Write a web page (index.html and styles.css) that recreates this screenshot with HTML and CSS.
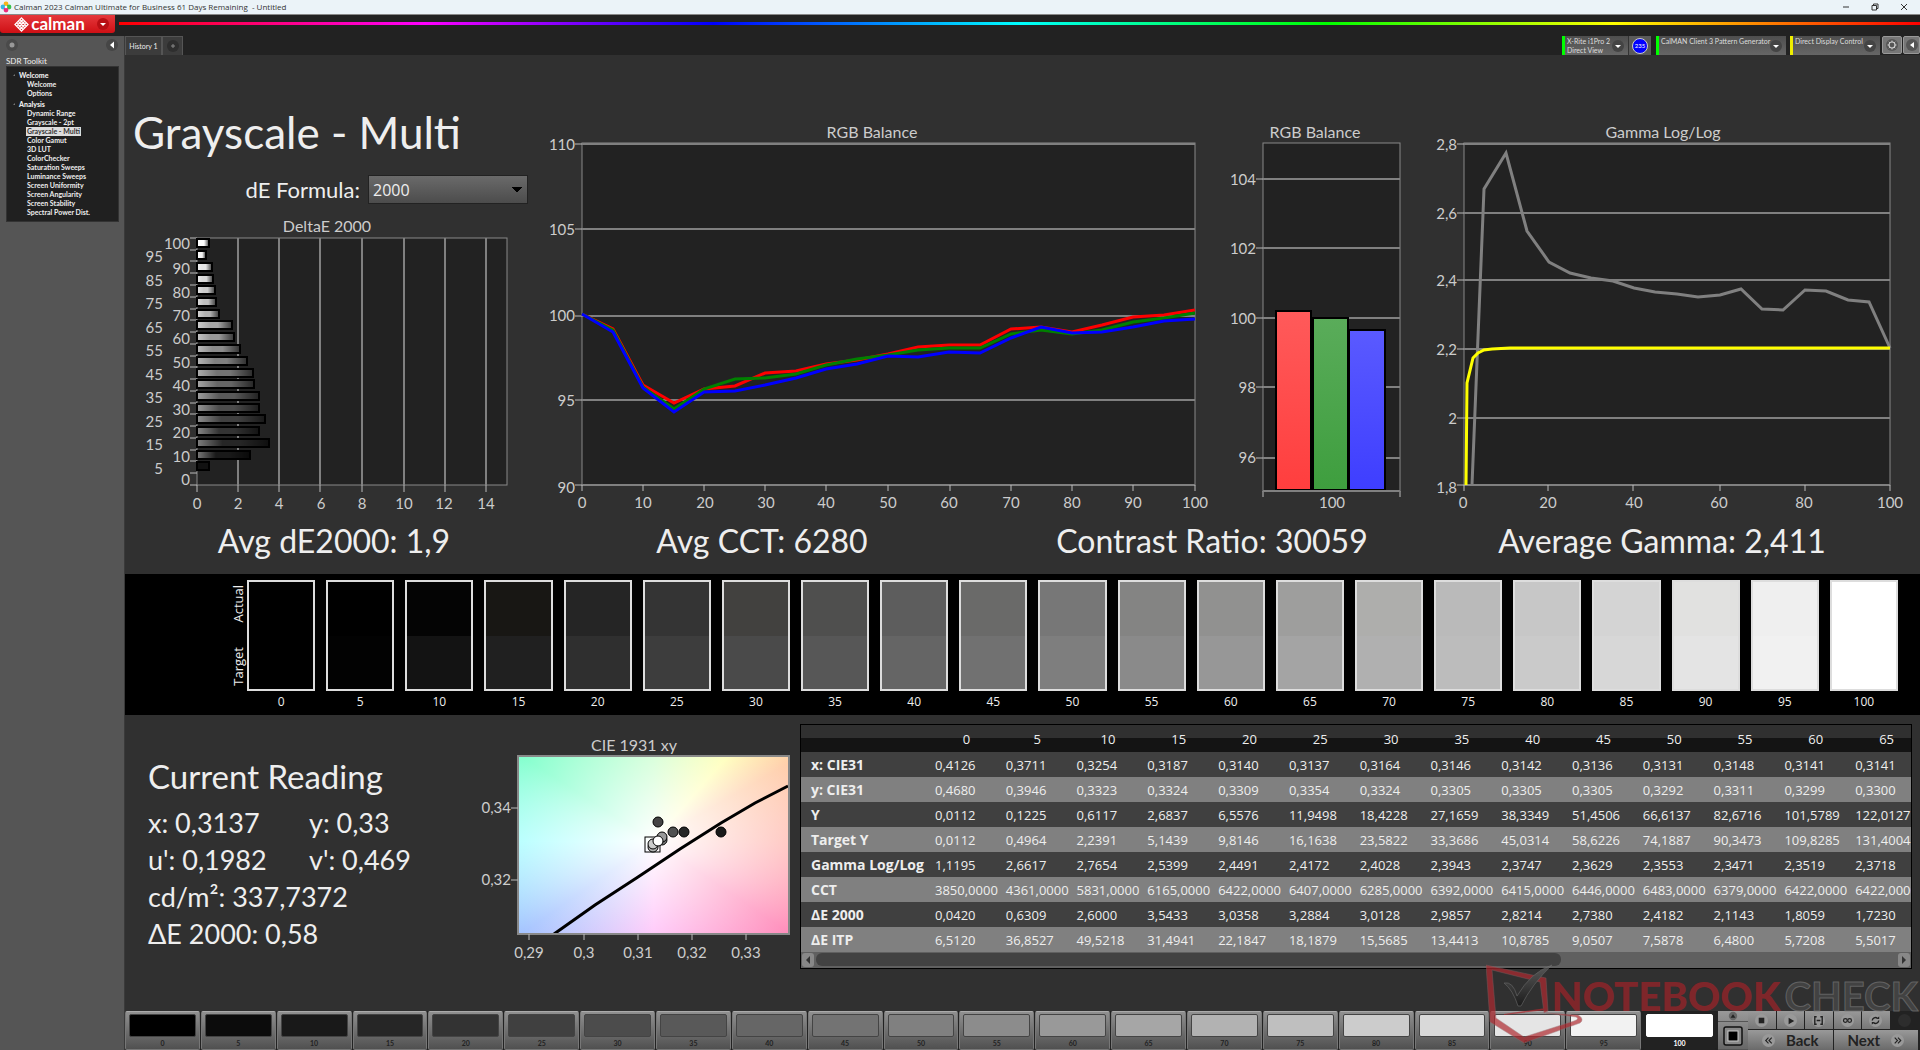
FILE: index.html
```html
<!DOCTYPE html>
<html lang="en">
<head>
<meta charset="utf-8">
<title>Calman 2023 Calman Ultimate for Business</title>
<link rel="stylesheet" href="styles.css">
</head>
<body>
<header class="titlebar">
  <svg class="app-icon" viewBox="0 0 12 12" aria-hidden="true"><circle cx="6" cy="3" r="2.4" fill="#f7b51c"/><circle cx="3" cy="6" r="2.4" fill="#35b6e6"/><circle cx="9" cy="6" r="2.4" fill="#38c24a"/><circle cx="6" cy="9" r="2.4" fill="#ea2f7b"/><path d="M6 4.500L7.500 6 6 7.500 4.500 6Z" fill="#fff"/></svg>
  <span class="window-title">Calman 2023 Calman Ultimate for Business 61 Days Remaining &nbsp;- Untitled</span>
  <div class="window-buttons">
    <button aria-label="Minimize"><svg viewBox="0 0 8 8"><path d="M1 4H7"/></svg></button>
    <button aria-label="Restore"><svg viewBox="0 0 8 8"><path d="M1 2.500H5.500V7H1ZM2.500 2.500V1H7V5.500H5.500"/></svg></button>
    <button aria-label="Close"><svg viewBox="0 0 8 8"><path d="M1 1L7 7M7 1L1 7"/></svg></button>
  </div>
</header>
<div class="brandbar">
  <button class="brand" aria-label="calman menu">
    <svg class="brand-mark" viewBox="0 0 16 16"><g fill="none" stroke="#fff" stroke-width="1.300"><path d="M8 1L15 8 8 15 1 8Z"/><path d="M4.500 4.500L11.500 11.500M11.500 4.500L4.500 11.500M6.300 2.700L13.300 9.700M9.700 2.700L2.700 9.700M2.700 6.300L9.700 13.300M13.300 6.300L6.300 13.300"/></g></svg>
    <span>calman</span>
    <svg class="drop" viewBox="0 0 12 12"><circle cx="6" cy="6" r="6" fill="#b80f14"/><path d="M3 5H9L6 8Z" fill="#fff"/></svg>
  </button>
  <div class="spectrum"></div>
</div>
<div class="workspace">
  <nav class="sidebar">
    <div class="side-tools">
      <button class="knob" aria-label="Options"><svg viewBox="0 0 12 12"><circle cx="6" cy="6" r="6" fill="#4a4a4a"/><circle cx="6" cy="6" r="2.500" fill="#999"/></svg></button>
      <button class="knob" aria-label="Collapse"><svg viewBox="0 0 12 12"><circle cx="6" cy="6" r="6" fill="#464646"/><path d="M8 2.500V9.500L4 6Z" fill="#fff"/></svg></button>
    </div>
    <h2 class="side-title">SDR Toolkit</h2>
    <div class="tree">
      <h3>Welcome</h3>
      <ul><li><a href="#">Welcome</a></li><li><a href="#">Options</a></li></ul>
      <h3>Analysis</h3>
      <ul>
        <li><a href="#">Dynamic Range</a></li><li><a href="#">Grayscale - 2pt</a></li><li><a href="#" class="current">Grayscale - Multi</a></li><li><a href="#">Color Gamut</a></li><li><a href="#">3D LUT</a></li><li><a href="#">ColorChecker</a></li><li><a href="#">Saturation Sweeps</a></li><li><a href="#">Luminance Sweeps</a></li><li><a href="#">Screen Uniformity</a></li><li><a href="#">Screen Angularity</a></li><li><a href="#">Screen Stability</a></li><li><a href="#">Spectral Power Dist.</a></li>
      </ul>
    </div>
  </nav>
  <div class="content">
    <div class="tabbar">
      <button class="tab">History 1</button>
      <button class="tab tab-add" aria-label="Add tab"><svg viewBox="0 0 12 12"><circle cx="6" cy="6" r="6" fill="#2e2e2e"/><path d="M6 4V8M4 6H8" stroke="#888"/></svg></button>
      <div class="devices">
        <button class="device meter"><span>X-Rite i1Pro 2<br>Direct View</span><svg class="drop" viewBox="0 0 12 12"><circle cx="6" cy="6" r="6" fill="#444"/><path d="M3 5H9L6 8Z" fill="#fff"/></svg></button>
        <button class="levels"><span>235</span></button>
        <button class="device generator"><span>CalMAN Client 3 Pattern Generator</span><svg class="drop" viewBox="0 0 12 12"><circle cx="6" cy="6" r="6" fill="#444"/><path d="M3 5H9L6 8Z" fill="#fff"/></svg></button>
        <button class="device display"><span>Direct Display Control</span><svg class="drop" viewBox="0 0 12 12"><circle cx="6" cy="6" r="6" fill="#444"/><path d="M3 5H9L6 8Z" fill="#fff"/></svg></button>
        <button class="tool" aria-label="Settings"><svg viewBox="0 0 12 12"><circle cx="6" cy="6" r="6" fill="#555"/><circle cx="6" cy="6" r="3" fill="none" stroke="#ccc" stroke-width="1.200"/><path d="M6 1.500V3M6 9V10.500M1.500 6H3M9 6H10.500M2.800 2.800L3.900 3.900M8.100 8.100L9.200 9.200M9.200 2.800L8.100 3.900M3.900 8.100L2.800 9.200" stroke="#ccc"/></svg></button>
        <button class="tool" aria-label="Expand"><svg viewBox="0 0 12 12"><circle cx="6" cy="6" r="6" fill="#555"/><path d="M8 3V9L4 6Z" fill="#fff"/></svg></button>
      </div>
    </div>

    <main class="page">
      <section class="charts">
        <div class="lead">
          <h1>Grayscale - Multi</h1>
          <div class="formula"><label for="de">dE Formula:</label><select id="de"><option>2000</option></select></div>
          <svg class="chart" viewBox="125 215 415 305" role="img" aria-label="DeltaE 2000">
            <defs><linearGradient id="shade"><stop offset="0" stop-color="#fff" stop-opacity=".4"/><stop offset=".35" stop-color="#fff" stop-opacity="0"/><stop offset=".6" stop-color="#000" stop-opacity="0"/><stop offset="1" stop-color="#000" stop-opacity=".6"/></linearGradient></defs>
            <text x="327" y="232" class="mid caption">DeltaE 2000</text>
            <rect x="197" y="238" width="310" height="247" class="plot"/>
            <path class="grid" d="M238 238V485M279 238V485M320 238V485M362 238V485M404 238V485M445 238V485M486 238V485"/>
            <path class="tick" d="M197 485V492M238 485V492M279 485V492M320 485V492M362 485V492M404 485V492M445 485V492M486 485V492M190 238H197M190 250H197M190 261H197M190 273H197M190 285H197M190 297H197M190 309H197M190 320H197M190 332H197M190 344H197M190 356H197M190 367H197M190 379H197M190 391H197M190 403H197M190 414H197M190 426H197M190 438H197M190 450H197M190 461H197M190 473H197M190 485H197"/>
            <g class="bars">
              <rect x="197" y="239" width="12" height="8" fill="#fff"/>
              <rect x="197" y="251" width="9" height="8" fill="#f2f2f2"/><rect x="197" y="263" width="15" height="8" fill="#e5e5e5"/><rect x="197" y="275" width="16" height="8" fill="#d9d9d9"/><rect x="197" y="286" width="18" height="8" fill="#ccc"/><rect x="197" y="298" width="19" height="8" fill="#bfbfbf"/><rect x="197" y="310" width="22" height="8" fill="#b2b2b2"/><rect x="197" y="321" width="35" height="8" fill="#a6a6a6"/><rect x="197" y="333" width="37" height="8" fill="#999"/><rect x="197" y="345" width="43" height="8" fill="#8c8c8c"/><rect x="197" y="357" width="50" height="8" fill="#808080"/><rect x="197" y="369" width="56" height="8" fill="#737373"/><rect x="197" y="380" width="57" height="8" fill="#666"/><rect x="197" y="392" width="62" height="8" fill="#595959"/><rect x="197" y="404" width="62" height="8" fill="#4c4c4c"/><rect x="197" y="415" width="68" height="8" fill="#404040"/><rect x="197" y="427" width="62" height="8" fill="#333"/><rect x="197" y="439" width="72" height="8" fill="#262626"/><rect x="197" y="451" width="53" height="8" fill="#191919"/><rect x="197" y="462" width="12" height="8" fill="#111"/>
            </g>
            <g class="shades" fill="url(#shade)">
              <rect x="198" y="240" width="10" height="6"/><rect x="198" y="252" width="7" height="6"/><rect x="198" y="264" width="13" height="6"/><rect x="198" y="276" width="14" height="6"/><rect x="198" y="287" width="16" height="6"/><rect x="198" y="299" width="17" height="6"/><rect x="198" y="311" width="20" height="6"/><rect x="198" y="322" width="33" height="6"/><rect x="198" y="334" width="35" height="6"/><rect x="198" y="346" width="41" height="6"/><rect x="198" y="358" width="48" height="6"/><rect x="198" y="370" width="54" height="6"/><rect x="198" y="381" width="55" height="6"/><rect x="198" y="393" width="60" height="6"/><rect x="198" y="405" width="60" height="6"/><rect x="198" y="416" width="66" height="6"/><rect x="198" y="428" width="60" height="6"/><rect x="198" y="440" width="70" height="6"/><rect x="198" y="452" width="51" height="6"/>
            </g>
            <g class="end"><text x="190" y="249">100</text><text x="190" y="274">90</text><text x="190" y="298">80</text><text x="190" y="321">70</text><text x="190" y="344">60</text><text x="190" y="368">50</text><text x="190" y="391">40</text><text x="190" y="415">30</text><text x="190" y="438">20</text><text x="190" y="462">10</text><text x="190" y="485">0</text>
            <text x="163" y="262">95</text><text x="163" y="286">85</text><text x="163" y="309">75</text><text x="163" y="333">65</text><text x="163" y="356">55</text><text x="163" y="380">45</text><text x="163" y="403">35</text><text x="163" y="427">25</text><text x="163" y="450">15</text><text x="163" y="474">5</text></g>
            <g class="mid"><text x="197" y="509">0</text><text x="238" y="509">2</text><text x="279" y="509">4</text><text x="321" y="509">6</text><text x="362" y="509">8</text><text x="404" y="509">10</text><text x="444" y="509">12</text><text x="486" y="509">14</text></g>
          </svg>
        </div>

        <svg class="chart" viewBox="540 110 680 410" role="img" aria-label="RGB Balance by level">
          <text x="872" y="138" class="mid caption">RGB Balance</text>
          <rect x="582" y="143" width="613" height="342" class="plot"/>
          <path class="grid" d="M582 144H1195M582 229H1195M582 316H1195M582 400H1195M582 485H1195"/>
          <path class="tick" d="M575 144H582M575 229H582M575 316H582M575 400H582M575 485H582M582 485V491M643 485V491M704 485V491M765 485V491M826 485V491M888 485V491M950 485V491M1011 485V491M1072 485V491M1133 485V491M1195 485V491"/>
          <g class="series">
            <polyline stroke="#f00" points="582,314 613,329 643,385 674,403 704,389 735,386 765,373 796,371 826,364 857,360 888,354 918,347 949,345 980,345 1011,329 1041,327 1072,332 1102,325 1133,317 1164,315 1195,310"/>
            <polyline stroke="#008000" points="582,314 613,330 643,387 674,409 704,389 735,379 765,378 796,374 826,365 857,359 888,355 918,350 949,348 980,348 1011,334 1041,330 1072,334 1102,330 1133,322 1164,318 1195,313"/>
            <polyline stroke="#00f" points="582,314 613,332 643,388 674,412 704,392 735,391 765,385 796,378 826,369 857,364 888,356 918,357 949,352 980,353 1011,338 1041,327 1072,333 1102,332 1133,327 1164,321 1195,319"/>
          </g>
          <g class="end"><text x="575" y="150">110</text><text x="575" y="235">105</text><text x="575" y="321">100</text><text x="575" y="406">95</text><text x="575" y="493">90</text></g>
          <g class="mid"><text x="582" y="508">0</text><text x="643" y="508">10</text><text x="705" y="508">20</text><text x="766" y="508">30</text><text x="826" y="508">40</text><text x="888" y="508">50</text><text x="949" y="508">60</text><text x="1011" y="508">70</text><text x="1072" y="508">80</text><text x="1133" y="508">90</text><text x="1195" y="508">100</text></g>
        </svg>

        <svg class="chart" viewBox="1220 110 200 410" role="img" aria-label="RGB Balance at 100">
          <defs>
            <linearGradient id="r" x2="0" y2="1"><stop stop-color="#ff5a5a"/><stop offset="1" stop-color="#ff3e3e"/></linearGradient>
            <linearGradient id="g" x2="0" y2="1"><stop stop-color="#5aac5a"/><stop offset="1" stop-color="#3e9e3e"/></linearGradient>
            <linearGradient id="b" x2="0" y2="1"><stop stop-color="#5a5aff"/><stop offset="1" stop-color="#3e3eff"/></linearGradient>
          </defs>
          <text x="1315" y="138" class="mid caption">RGB Balance</text>
          <rect x="1263" y="143" width="137" height="348" class="plot"/>
          <path class="grid" d="M1263 179H1400M1263 248H1400M1263 318H1400M1263 387H1400M1263 458H1400"/>
          <path class="tick" d="M1256 179H1263M1256 248H1263M1256 318H1263M1256 387H1263M1256 458H1263M1263 491V497M1400 491V497"/>
          <g class="columns"><rect x="1276" y="311" width="35" height="179" fill="url(#r)"/><rect x="1313" y="318" width="35" height="172" fill="url(#g)"/><rect x="1349" y="330" width="36" height="160" fill="url(#b)"/></g>
          <path class="axis" d="M1263 491H1400"/>
          <g class="end"><text x="1256" y="185">104</text><text x="1256" y="254">102</text><text x="1256" y="324">100</text><text x="1256" y="393">98</text><text x="1256" y="463">96</text></g>
          <text x="1332" y="508" class="mid">100</text>
        </svg>

        <svg class="chart" viewBox="1420 110 500 410" role="img" aria-label="Gamma Log/Log">
          <text x="1663" y="138" class="mid caption">Gamma Log/Log</text>
          <rect x="1464" y="143" width="426" height="342" class="plot"/>
          <path class="grid" d="M1464 144H1890M1464 213H1890M1464 280H1890M1464 349H1890M1464 418H1890M1464 485H1890"/>
          <path class="tick" d="M1457 144H1464M1457 213H1464M1457 280H1464M1457 349H1464M1457 418H1464M1457 485H1464M1464 485V491M1548 485V491M1633 485V491M1720 485V491M1805 485V491M1890 485V491"/>
          <g class="series">
            <polyline stroke="#808080" points="1472,485 1484,189 1506,153 1527,231 1549,262 1570,273 1591,278 1613,281 1634,288 1655,292 1677,294 1698,297 1720,295 1741,289 1762,309 1783,310 1805,290 1826,291 1848,300 1869,302 1890,348"/>
            <polyline stroke="#ff0" points="1466,485 1467,383 1473,358 1478,353 1484,350 1492,349 1510,348 1890,348"/>
          </g>
          <g class="end"><text x="1457" y="150">2,8</text><text x="1457" y="219">2,6</text><text x="1457" y="286">2,4</text><text x="1457" y="355">2,2</text><text x="1457" y="424">2</text><text x="1457" y="493">1,8</text></g>
          <g class="mid"><text x="1463" y="508">0</text><text x="1548" y="508">20</text><text x="1634" y="508">40</text><text x="1719" y="508">60</text><text x="1804" y="508">80</text><text x="1890" y="508">100</text></g>
        </svg>
      </section>
      <section class="stats"><p>Avg dE2000: 1,9</p><p>Avg CCT: 6280</p><p>Contrast Ratio: 30059</p><p>Average Gamma: 2,411</p></section>

      <section class="patches">
        <div class="patch-sides"><span>Actual</span><span>Target</span></div>
        <figure><i style="--a:#000;--t:#000"></i><figcaption>0</figcaption></figure>
        <figure><i style="--a:#000;--t:#020202"></i><figcaption>5</figcaption></figure>
        <figure><i style="--a:#040404;--t:#131313"></i><figcaption>10</figcaption></figure>
        <figure><i style="--a:#181714;--t:#202020"></i><figcaption>15</figcaption></figure>
        <figure><i style="--a:#252525;--t:#2f2f2f"></i><figcaption>20</figcaption></figure>
        <figure><i style="--a:#343434;--t:#3d3d3d"></i><figcaption>25</figcaption></figure>
        <figure><i style="--a:#42413f;--t:#4a4a4a"></i><figcaption>30</figcaption></figure>
        <figure><i style="--a:#4f4f4e;--t:#575757"></i><figcaption>35</figcaption></figure>
        <figure><i style="--a:#5d5d5d;--t:#656565"></i><figcaption>40</figcaption></figure>
        <figure><i style="--a:#6a6a69;--t:#717171"></i><figcaption>45</figcaption></figure>
        <figure><i style="--a:#777777;--t:#7e7e7e"></i><figcaption>50</figcaption></figure>
        <figure><i style="--a:#848483;--t:#8a8a8a"></i><figcaption>55</figcaption></figure>
        <figure><i style="--a:#919190;--t:#979797"></i><figcaption>60</figcaption></figure>
        <figure><i style="--a:#9e9e9d;--t:#a4a4a4"></i><figcaption>65</figcaption></figure>
        <figure><i style="--a:#aeaeac;--t:#b0b0b0"></i><figcaption>70</figcaption></figure>
        <figure><i style="--a:#bababa;--t:#bcbcbc"></i><figcaption>75</figcaption></figure>
        <figure><i style="--a:#c7c7c7;--t:#cacaca"></i><figcaption>80</figcaption></figure>
        <figure><i style="--a:#d4d4d4;--t:#d7d7d7"></i><figcaption>85</figcaption></figure>
        <figure><i style="--a:#e1e1e0;--t:#e4e4e4"></i><figcaption>90</figcaption></figure>
        <figure><i style="--a:#efefef;--t:#f1f1f1"></i><figcaption>95</figcaption></figure>
        <figure><i style="--a:#fff;--t:#fff"></i><figcaption>100</figcaption></figure>
      </section>

      <section class="details">
        <div class="reading">
          <h2>Current Reading</h2>
          <div class="pairs"><span>x: 0,3137</span><span>y: 0,33</span><span>u': 0,1982</span><span>v': 0,469</span><span class="wide">cd/m²: 337,7372</span><span class="wide">ΔE 2000: 0,58</span></div>
        </div>
        <svg class="chart cie" viewBox="480 735 320 230" role="img" aria-label="CIE 1931 xy">
          <text x="634" y="751" class="mid caption">CIE 1931 xy</text>
          <foreignObject x="518" y="756" width="271" height="178"><div class="gamut"></div></foreignObject>
          <path d="M554 934L595 905 638 877 680 849 721 823 755 803 788 786" class="locus"/>
          <rect x="518" y="756" width="271" height="178" class="frame"/>
          <path class="tick" d="M511 808H518M511 880H518M529 934V940M584 934V940M638 934V940M692 934V940M746 934V940"/>
          <g class="dots"><circle cx="658" cy="822" r="5" fill="#444"/><circle cx="673" cy="832" r="5" fill="#505050"/><circle cx="684" cy="832" r="5" fill="#262626"/><circle cx="721" cy="832" r="5" fill="#191919"/><rect x="645" y="837" width="15" height="15" fill="none"/><circle cx="662" cy="840" r="5" fill="#777"/><circle cx="662" cy="837" r="5" fill="#999"/><circle cx="653" cy="847" r="5" fill="#b2b2b2"/><circle cx="653" cy="844" r="5" fill="#ccc"/><circle cx="658" cy="841" r="5" fill="#fff"/></g>
          <g class="end"><text x="511" y="813">0,34</text><text x="511" y="885">0,32</text></g>
          <g class="mid"><text x="529" y="958">0,29</text><text x="584" y="958">0,3</text><text x="638" y="958">0,31</text><text x="692" y="958">0,32</text><text x="746" y="958">0,33</text></g>
        </svg>
        <div class="table-box">
          <table>
            <thead><tr><th class="name"></th><th>0</th><th>5</th><th>10</th><th>15</th><th>20</th><th>25</th><th>30</th><th>35</th><th>40</th><th>45</th><th>50</th><th>55</th><th>60</th><th>65</th></tr></thead>
            <tbody>
              <tr><th>x: CIE31</th><td>0,4126</td><td>0,3711</td><td>0,3254</td><td>0,3187</td><td>0,3140</td><td>0,3137</td><td>0,3164</td><td>0,3146</td><td>0,3142</td><td>0,3136</td><td>0,3131</td><td>0,3148</td><td>0,3141</td><td>0,3141</td></tr>
              <tr><th>y: CIE31</th><td>0,4680</td><td>0,3946</td><td>0,3323</td><td>0,3324</td><td>0,3309</td><td>0,3354</td><td>0,3324</td><td>0,3305</td><td>0,3305</td><td>0,3305</td><td>0,3292</td><td>0,3311</td><td>0,3299</td><td>0,3300</td></tr>
              <tr><th>Y</th><td>0,0112</td><td>0,1225</td><td>0,6117</td><td>2,6837</td><td>6,5576</td><td>11,9498</td><td>18,4228</td><td>27,1659</td><td>38,3349</td><td>51,4506</td><td>66,6137</td><td>82,6716</td><td>101,5789</td><td>122,0127</td></tr>
              <tr><th>Target Y</th><td>0,0112</td><td>0,4964</td><td>2,2391</td><td>5,1439</td><td>9,8146</td><td>16,1638</td><td>23,5822</td><td>33,3686</td><td>45,0314</td><td>58,6226</td><td>74,1887</td><td>90,3473</td><td>109,8285</td><td>131,4004</td></tr>
              <tr><th>Gamma Log/Log</th><td>1,1195</td><td>2,6617</td><td>2,7654</td><td>2,5399</td><td>2,4491</td><td>2,4172</td><td>2,4028</td><td>2,3943</td><td>2,3747</td><td>2,3629</td><td>2,3553</td><td>2,3471</td><td>2,3519</td><td>2,3718</td></tr>
              <tr><th>CCT</th><td>3850,0000</td><td>4361,0000</td><td>5831,0000</td><td>6165,0000</td><td>6422,0000</td><td>6407,0000</td><td>6285,0000</td><td>6392,0000</td><td>6415,0000</td><td>6446,0000</td><td>6483,0000</td><td>6379,0000</td><td>6422,0000</td><td>6422,0000</td></tr>
              <tr><th>ΔE 2000</th><td>0,0420</td><td>0,6309</td><td>2,6000</td><td>3,5433</td><td>3,0358</td><td>3,2884</td><td>3,0128</td><td>2,9857</td><td>2,8214</td><td>2,7380</td><td>2,4182</td><td>2,1143</td><td>1,8059</td><td>1,7230</td></tr>
              <tr><th>ΔE ITP</th><td>6,5120</td><td>36,8527</td><td>49,5218</td><td>31,4941</td><td>22,1847</td><td>18,1879</td><td>15,5685</td><td>13,4413</td><td>10,8785</td><td>9,0507</td><td>7,5878</td><td>6,4800</td><td>5,7208</td><td>5,5017</td></tr>
            </tbody>
          </table>
          <div class="scroller"><button aria-label="Scroll left"><svg viewBox="0 0 12 14"><path d="M8 3V11L4 7Z"/></svg></button><div class="track"><div class="thumb"></div></div><button aria-label="Scroll right"><svg viewBox="0 0 12 14"><path d="M4 3V11L8 7Z"/></svg></button></div>
        </div>
      </section>
    </main>

    <footer class="playbar">
      <div class="levels-row">
        <button><i style="background:#000"></i>0</button><button><i style="background:#0c0c0c"></i>5</button><button><i style="background:#191919"></i>10</button><button><i style="background:#262626"></i>15</button><button><i style="background:#333"></i>20</button><button><i style="background:#404040"></i>25</button><button><i style="background:#4c4c4c"></i>30</button><button><i style="background:#595959"></i>35</button><button><i style="background:#666"></i>40</button><button><i style="background:#737373"></i>45</button><button><i style="background:#808080"></i>50</button><button><i style="background:#8c8c8c"></i>55</button><button><i style="background:#999"></i>60</button><button><i style="background:#a6a6a6"></i>65</button><button><i style="background:#b2b2b2"></i>70</button><button><i style="background:#bfbfbf"></i>75</button><button><i style="background:#ccc"></i>80</button><button><i style="background:#d9d9d9"></i>85</button><button><i style="background:#e5e5e5"></i>90</button><button><i style="background:#f2f2f2"></i>95</button><button class="active"><i style="background:#fff"></i>100</button>
      </div>
      <div class="pattern">
        <button aria-label="Show patterns"><svg viewBox="0 0 12 12"><circle cx="6" cy="6" r="5" fill="#666"/><path d="M3 8H9L6 4Z" fill="#222"/></svg></button>
        <button aria-label="Window pattern"><svg class="win" viewBox="0 0 20 20"><rect x="1" y="1" width="18" height="18" rx="2" fill="#888" stroke="#111" stroke-width="1.500"/><rect x="5" y="5" width="10" height="10" fill="#000" stroke="#ccc"/></svg></button>
      </div>
      <div class="transport">
        <div class="media">
          <button aria-label="Stop"><svg viewBox="0 0 14 14"><circle cx="7" cy="7" r="7" fill="#999"/><path d="M4 4H10V10H4Z" fill="#222"/></svg></button>
          <button aria-label="Play"><svg viewBox="0 0 14 14"><circle cx="7" cy="7" r="7" fill="#999"/><path d="M5 4L11 7.500 5 11Z" fill="#222"/></svg></button>
          <button aria-label="Step"><svg viewBox="0 0 14 14"><circle cx="7" cy="7" r="7" fill="#999"/><path d="M5 3H3V11H5M9 3H11V11H9M5 7H9" fill="none" stroke="#222" stroke-width="1.500"/></svg></button>
          <button aria-label="Loop"><svg viewBox="0 0 14 14"><circle cx="7" cy="7" r="7" fill="#999"/><g fill="none" stroke="#222" stroke-width="1.300"><circle cx="4.700" cy="7" r="2"/><circle cx="9.300" cy="7" r="2"/></g></svg></button>
          <button aria-label="Refresh"><svg viewBox="0 0 14 14"><circle cx="7" cy="7" r="7" fill="#999"/><path d="M3.500 7A3.500 3.500 0 0 1 9 4.500M10.500 7A3.500 3.500 0 0 1 5 9.500" fill="none" stroke="#222" stroke-width="1.500"/><path d="M8 5.500H11V2.500ZM6 8.500H3V11.500Z" fill="#222"/></svg></button>
          <button class="off" aria-label="Record" disabled><svg viewBox="0 0 14 14"><circle cx="7" cy="7" r="7" fill="#2d2d2d"/></svg></button>
        </div>
        <div class="steps">
          <button><svg viewBox="0 0 14 14"><circle cx="7" cy="7" r="7" fill="#999"/><path d="M7 4L4 7 7 10M10.500 4L7.500 7 10.500 10" fill="none" stroke="#222" stroke-width="1.200"/></svg>Back</button>
          <button>Next<svg viewBox="0 0 14 14"><circle cx="7" cy="7" r="7" fill="#999"/><path d="M4 4L7 7 4 10M7.500 4L10.500 7 7.500 10" fill="none" stroke="#222" stroke-width="1.200"/></svg></button>
        </div>
      </div>
    </footer>
  </div>
</div>
<div class="watermark">
  <svg viewBox="0 0 104 80" aria-hidden="true"><defs><linearGradient id="wm" x2="0" y2="1"><stop stop-color="#6a6a6a"/><stop offset="1" stop-color="#151515"/></linearGradient></defs><path fill-rule="evenodd" d="M0 1L60 14 62 47 58 49 54 18 6 6 10 54 38 73 88 57Q94 55 90 53L60 49 92 51Q99 55 94 59L38 79 4 58Z" fill="#b02a30" stroke="#8e6a6c" stroke-width=".5"/><path d="M60 46L18 51V50L60 44Z" fill="#b02a30"/><path d="M18 19Q27 17 31 32Q45 8 66 1Q46 20 35 42H32Q27 26 18 19Z" fill="url(#wm)" stroke="#777" stroke-width=".7"/></svg>
  <span class="wm-a">NOTEBOOK</span><span class="wm-b">CHECK</span>
</div>
</body>
</html>
```
FILE: styles.css
```css
* { box-sizing: border-box; }
body { margin: 0; min-height: 100vh; display: flex; flex-direction: column; position: relative; overflow-x: hidden; background: #222; color: #eee; font-family: Lato, "Open Sans", sans-serif; }
button { margin: 0; padding: 0; border: 0; background: none; color: inherit; font: inherit; display: flex; align-items: center; justify-content: center; }
h1, h2, h3, p, ul, figure { margin: 0; padding: 0; font-weight: 400; list-style: none; }
svg { display: block; }

.titlebar { display: flex; align-items: center; height: 15px; background: #ebf3f8; border-bottom: 1px solid #888; color: #333; font: 8px/14px "Open Sans", sans-serif; }
.app-icon { width: 12px; height: 12px; margin-right: 2px; }
.window-buttons { display: flex; gap: 21px; margin-left: auto; margin-right: 12px; }
.window-buttons svg { width: 8px; height: 8px; fill: none; stroke: #333; stroke-width: 1; }

.brandbar { display: flex; height: 21px; gap: 4px; background: #222; }
.brand { width: 115px; height: 18px; gap: 2px; padding-left: 8px; border-radius: 0 0 3px 3px; background: linear-gradient(#e5383c, #cf1015); color: #fff; font-size: 17px; line-height: 16px; font-weight: 700; }
.brand-mark { width: 15px; height: 15px; }
.brand .drop { margin-left: 10px; }
.drop { width: 12px; height: 12px; flex: none; }
.spectrum { flex: 1; height: 3px; margin-top: 7px; background: linear-gradient(90deg, #f00, #f0f 17%, #00f 33%, #0ff 50%, #0f0 67%, #ff0 83%, #f00); }

.workspace { flex: 1; display: flex; }
.sidebar { width: 125px; flex: none; padding: 3px 6px; background: #555; border-right: 1px solid #3a3a3a; }
.side-tools { display: flex; justify-content: space-between; }
.knob svg { width: 12px; height: 12px; }
.side-title { margin-top: 5px; font-size: 8px; line-height: 10px; }
.tree { padding: 3px 0 4px 12px; height: 156px; background: #202020; border: 1px solid #333; font-size: 7px; line-height: 9px; width: 113px; }
.tree h3 { font-size: 7px; line-height: 10px; font-weight: 900; position: relative; }
.tree h3::before { content: ""; position: absolute; left: -6px; top: 4px; border: 1px solid #777; border-top-color: transparent; border-left-color: transparent; }
.tree ul { padding-left: 8px; margin-bottom: 1px; font-weight: 700; }
.tree li { height: 9px; }
.tree a { color: #eee; text-decoration: none; }
.tree a.current { display: inline-block; background: #ddd; color: #333; padding: 0 1px; margin-left: -1px; }

.content { flex: 1; min-width: 0; display: flex; flex-direction: column; }
.tabbar { display: flex; height: 19px; background: #222; }
.tab { width: 37px; background: #3c3c3c; border: 1px solid #555; border-bottom: 0; font-size: 7px; }
.tab-add { width: 21px; }
.tab-add svg { width: 12px; height: 12px; }
.devices { display: flex; margin-left: auto; font-size: 7px; line-height: 9px; white-space: nowrap; }
.device { justify-content: space-between; align-items: flex-start; padding: 1px 4px 0 2px; border-left: 3px solid #0f0; background: linear-gradient(#4e4e4e, #666); text-align: left; color: #ddd; }
.device .drop { margin-top: 3px; }
.meter { width: 67px; border-right: 1px solid #333; }
.levels { width: 22px; margin-right: 5px; background: #5a5a5a; }
.levels span { width: 16px; height: 16px; border-radius: 8px; border: 1px solid #ccc; background: #00f; color: #fff; font-size: 6px; line-height: 14px; }
.generator { width: 130px; margin-right: 4px; }
.display { width: 90px; margin-right: 2px; border-left-color: #ee0; }
.tool { width: 20px; height: 18px; border: 1px solid #999; border-radius: 2px; background: #777; }
.tool:last-child { width: 17px; margin-left: 1px; }
.tool svg { width: 12px; height: 12px; }

.page { flex: 1; background: #303030; }
.charts { display: grid; grid-template-columns: 415fr 680fr 200fr 500fr; padding-top: 55px; }
.chart { width: 100%; height: auto; }
.chart text { font-size: 15px; fill: #ccc; }
.chart .caption { font-size: 16px; }
.mid { text-anchor: middle; }
.end { text-anchor: end; }
.plot { fill: #222; stroke: #888; stroke-width: 1; }
.frame { fill: none; stroke: #888; stroke-width: 2; }
.grid, .axis { fill: none; stroke: #808080; stroke-width: 2; }
.tick { fill: none; stroke: #bbb; stroke-width: 1; }
.bars rect, .columns rect { stroke: #000; stroke-width: 2; }
.series polyline { fill: none; stroke-width: 3; }
.locus { fill: none; stroke: #000; stroke-width: 3; }
.dots > * { stroke: #000; stroke-width: 1; }
.lead h1 { padding-left: 8px; margin-bottom: 21px; font-size: 44px; line-height: 44px; }
.formula { display: flex; align-items: center; justify-content: flex-end; gap: 8px; padding-right: 12px; margin-bottom: 11px; }
.formula label { font-size: 22px; line-height: 24px; }
.formula select { width: 160px; height: 29px; padding: 0 4px; appearance: none; border: 1px solid #222; border-radius: 0; color: #eee; font: 16px "Open Sans", sans-serif; background: conic-gradient(from -45deg at 50% 100%, #000 90deg, transparent 0) right 5px top 11px / 10px 5px no-repeat, linear-gradient(#6a6a6a, #4c4c4c); }
.stats { display: grid; grid-template-columns: 418fr 438fr 462fr 438fr; padding-right: 39px; height: 54px; font-size: 32px; line-height: 42px; text-align: center; white-space: nowrap; }

.patches { display: flex; gap: 11px; height: 141px; padding: 6px 22px 0 106px; background: #000; }
.patch-sides { display: flex; justify-content: space-between; flex-direction: column; height: 111px; width: 16px; padding: 5px 0; margin-right: -11px; font: 13px/14px "Open Sans", sans-serif; }
.patch-sides span { writing-mode: vertical-rl; transform: rotate(180deg); text-align: center; }
.patches figure { flex: 1; }
.patches i { display: block; height: 111px; border: 2px solid #ddd; background: linear-gradient(var(--a) 50%, var(--t) 50%); }
.patches figcaption { padding-top: 3px; text-align: center; font: 12px/16px "Open Sans", sans-serif; }

.details { display: grid; grid-template-columns: 355fr 320fr 1112fr; padding: 9px 8px 0 0; align-items: start; }
.reading { padding: 30px 0 0 23px; }
.reading h2 { font-size: 33px; line-height: 44px; }
.pairs { display: grid; grid-template-columns: 161px 1fr; font-size: 27px; line-height: 37px; margin-top: 6px; }
.wide { grid-column: 1 / -1; }
.cie { margin-top: 11px; }
.gamut { height: 100%; background: radial-gradient(ellipse 75% 75% at 50% 48%, #fff, transparent), conic-gradient(from 0deg at 50% 48%, #c4ffc8, #ffffa8 41deg, #ffc8a0 60deg, #ffb0a8 90deg, #ff88b8 124deg, #ffb4f8 180deg, #a0c0ff 235deg, #98ffff 270deg, #78ffc8 303deg, #c4ffc8); }

.table-box { overflow: hidden; border: 1px solid #000; background: #606060; }
table { width: 101%; table-layout: fixed; border-collapse: collapse; font: 13px/18px "Open Sans", sans-serif; }
thead tr { height: 27px; background: linear-gradient(#303030 50%, #141414 50%); }
thead th { padding: 1px 0 0; font-weight: 400; text-align: center; }
thead .name { width: 130px; }
tbody tr { height: 25px; background: #404040; }
tbody tr:nth-child(even) { background: #808080; }
tbody th { padding: 0 0 0 10px; text-align: left; font-size: 14px; font-weight: 700; white-space: nowrap; }
td { padding: 0 0 0 4px; white-space: nowrap; }
.scroller { display: flex; align-items: center; gap: 2px; height: 16px; padding: 0 1px; background: #606060; }
.scroller button { border-radius: 3px; background: #888; }
.scroller svg { width: 12px; height: 14px; fill: #333; }
.track { flex: 1; height: 14px; }
.thumb { width: 69%; height: 13px; border-radius: 6px; background: #424242; }

.playbar { display: flex; height: 39px; padding-right: 2px; background: #222; }
.levels-row { flex: 1593; display: grid; grid-template-columns: repeat(21, 1fr); }
.levels-row button { flex-direction: column; justify-content: flex-start; padding: 2px 3px 0; margin-right: 1px; border: 1px solid #777; border-top: 1px solid #aaa; border-radius: 2px; background: linear-gradient(#909090, #505050); color: #222; font-size: 7px; line-height: 10px; font-weight: 700; }
.levels-row i { width: 100%; height: 23px; margin-bottom: 1px; border-radius: 2px; border: 1px solid #444; }
.levels-row .active { background: #222; border-color: #222; color: #fff; }
.levels-row .active i { border-color: #fff; }
.pattern { width: 30px; display: grid; grid-template-rows: 11px 1fr; background: linear-gradient(#999, #666); }
.pattern button { border-bottom: 1px solid #555; }
.pattern svg { width: 10px; height: 10px; }
.pattern .win { width: 20px; height: 20px; }
.transport { width: 170px; display: grid; grid-template-rows: 18px 1fr; gap: 1px; }
.media { display: grid; grid-template-columns: repeat(6, 1fr); gap: 1px; }
.media button { background: linear-gradient(#999, #777); }
.media .off { background: #222; }
.media svg, .steps svg { width: 13px; height: 13px; }
.steps { display: grid; grid-template-columns: 1fr 1fr; gap: 1px; }
.steps button { gap: 11px; background: linear-gradient(#999, #6a6a6a); color: #222; font-size: 15px; font-weight: 700; line-height: 18px; }

.watermark { position: absolute; right: 2px; bottom: 6px; display: flex; opacity: .7; font-size: 40px; line-height: 34px; font-weight: 900; pointer-events: none; }
.watermark svg { width: 104px; height: 80px; margin-right: -38px; }
.watermark span { margin-top: 15px; }
.wm-a { margin-right: 4px; color: #a02228; }
.wm-b { color: #4a4a4a; -webkit-text-stroke: 1px #777; font-weight: 700; }
```
